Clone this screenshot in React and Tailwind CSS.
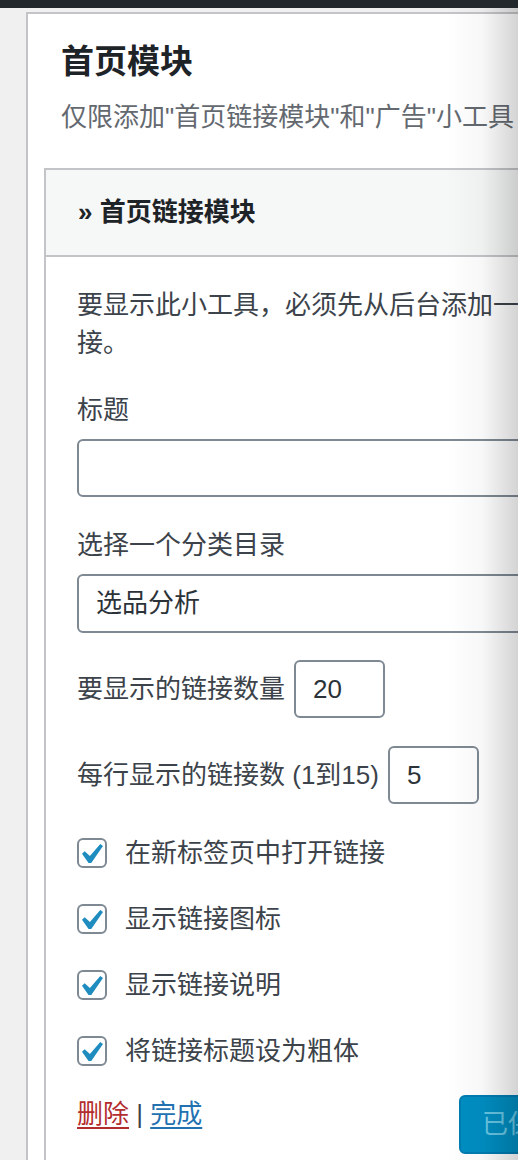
import React from "react";

const font = "font-['Liberation_Sans','Noto_Sans_CJK_SC',sans-serif]";

function CheckRow({ label, className = "" }) {
  return (
    <label className={`flex h-[30px] items-center gap-[18px] ${className}`}>
      <span className="flex h-[30px] w-[30px] shrink-0 items-center justify-center rounded-[6px] border-2 border-[#7e8993] bg-white">
        <svg width="21" height="19" viewBox="5.78 4.89 10.39 9.32">
          <path
            fill="#1e8cbe"
            d="M14.83 4.89l1.34.94-5.81 8.38H9.02L5.78 9.67l1.34-1.25 2.57 2.4z"
          />
        </svg>
      </span>
      <span className="whitespace-nowrap leading-[38px] text-[#3c434a]">{label}</span>
    </label>
  );
}

function NumberBox({ value }) {
  return (
    <div className="flex h-[58px] w-[91px] shrink-0 items-center rounded-[6px] border-2 border-[#7e8993] bg-white pl-[17px] text-[#2c3338]">
      {value}
    </div>
  );
}

export default function App() {
  return (
    <div className={`relative h-[1160px] w-[518px] overflow-hidden bg-[#f0f0f1] text-[26px] ${font}`}>
      <div className="h-[8px] bg-[#23282d]" />

      <div className="pl-[26px] pt-[4px]">
        <div className="w-[640px] border-l-2 border-t-2 border-[#c3c4c7] bg-white pb-10">
          <div className="pl-[33px] pt-[28px]">
            <h2 className="whitespace-nowrap text-[33px] font-semibold leading-[40px] text-[#1d2327]">首页模块</h2>
            <p className="mt-[16px] whitespace-nowrap leading-[38px] text-[#646970]">
              仅限添加"首页链接模块"和"广告"小工具
            </p>
          </div>

          <div className="ml-[16px] mt-[32px] border-2 border-r-0 border-[#c3c4c7]">
            <div className="flex h-[87px] items-center border-b-2 border-[#c3c4c7] bg-[#f6f7f7] pl-[32px] font-semibold text-[#1d2327]">
              » 首页链接模块
            </div>

            <div className="pb-[10px] pl-[31px] pt-[29px] text-[#3c434a]">
              <p className="whitespace-nowrap leading-[38px]">
                要显示此小工具，必须先从后台添加一个链接分类和至少一个链
                <br />
                接。
              </p>

              <p className="mt-[29px] leading-[38px]">标题</p>
              <div className="mt-[10px] h-[58px] w-[520px] rounded-[6px] border-2 border-[#7e8993] bg-white" />

              <p className="mt-[29px] leading-[38px]">选择一个分类目录</p>
              <div className="mt-[10px] flex h-[59px] w-[520px] items-center rounded-[6px] border-2 border-[#7e8993] bg-white pl-[17px] text-[#2c3338]">
                选品分析
              </div>

              <div className="mt-[27px] flex items-center gap-[9px]">
                <span className="whitespace-nowrap leading-[38px]">要显示的链接数量</span>
                <NumberBox value="20" />
              </div>

              <div className="mt-[28px] flex items-center gap-[9px]">
                <span className="whitespace-nowrap leading-[38px]">每行显示的链接数 (1到15)</span>
                <NumberBox value="5" />
              </div>

              <div className="mt-[34px] flex flex-col gap-[36px]">
                <CheckRow label="在新标签页中打开链接" />
                <CheckRow label="显示链接图标" />
                <CheckRow label="显示链接说明" />
                <CheckRow label="将链接标题设为粗体" />
              </div>

              <div className="mt-[29px] flex w-[512px] items-start justify-between">
                <div className="whitespace-nowrap leading-[38px]">
                  <a href="#" className="text-[#b32d2e] underline underline-offset-4">删除</a>
                  <span className="text-[#3c434a]"> | </span>
                  <a href="#" className="text-[#2271b1] underline underline-offset-4">完成</a>
                </div>
                <button
                  type="button"
                  disabled
                  className="h-[59px] w-[130px] shrink-0 rounded-[6px] border-2 border-[#007cb2] bg-[#008ec2] pl-[21px] text-left text-[26px] text-[#66c6e4]"
                >
                  已保存
                </button>
              </div>
            </div>
          </div>
        </div>
      </div>

      <div className="pointer-events-none absolute bottom-0 right-0 top-[8px] w-[72px] bg-linear-to-r from-transparent via-black/[0.03] to-black/[0.17]" />
    </div>
  );
}
